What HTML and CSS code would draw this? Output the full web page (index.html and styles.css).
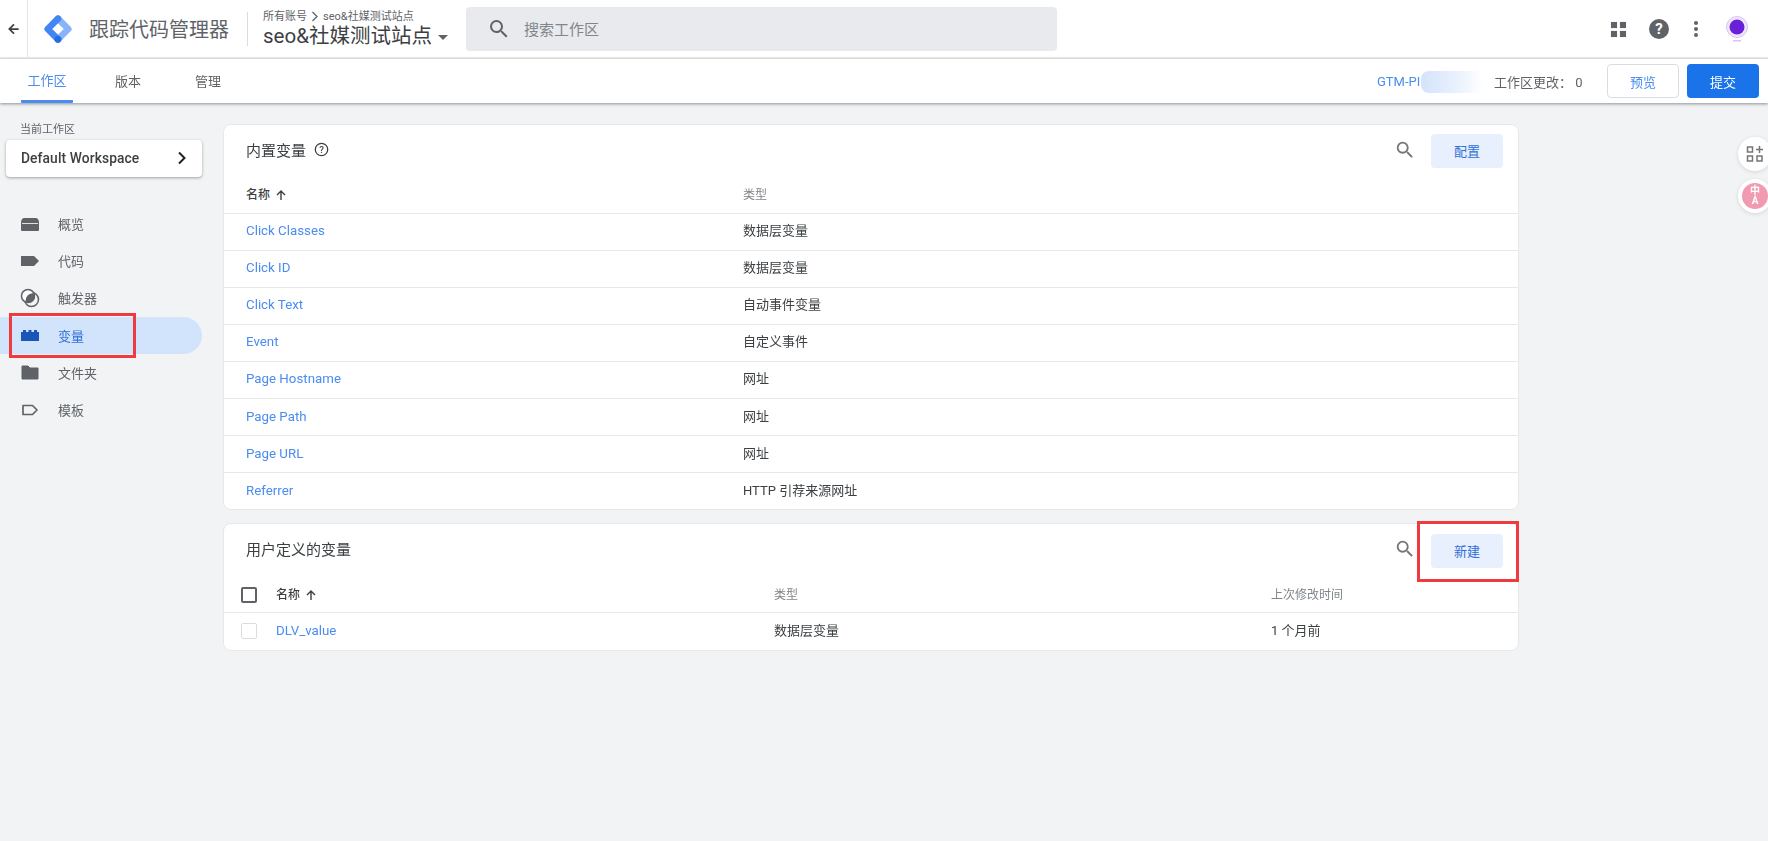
FILE: index.html
```html
<!DOCTYPE html>
<html lang="zh-CN">
<head>
<meta charset="utf-8">
<title>跟踪代码管理器</title>
<link rel="stylesheet" href="styles.css">
</head>
<body>
<div class="page">
  <header class="topbar">
    <div class="back">
      <svg width="14" height="14" viewBox="0 0 24 24"><path d="M20 12H5M12 4l-8 8 8 8" fill="none" stroke="#3c4043" stroke-width="3"/></svg>
    </div>
    <div class="brand">
      <svg class="logo" width="30" height="30" viewBox="0 0 32 32">
        <path d="M16 5L27 16L16 27" fill="none" stroke="#8ab4f8" stroke-width="7" stroke-linejoin="round" stroke-linecap="round"/>
        <path d="M16 5L5 16L16 27" fill="none" stroke="#4285f4" stroke-width="7" stroke-linejoin="round" stroke-linecap="round"/>
        <circle cx="16" cy="27" r="3.6" fill="#246fdb"/>
      </svg>
      <span class="brand-name">跟踪代码管理器</span>
    </div>
    <div class="account">
      <div class="crumb">所有账号 <svg width="8" height="11" viewBox="0 0 8 11"><path d="M1.5 1l4.5 4.5L1.5 10" fill="none" stroke="#5f6368" stroke-width="1.3"/></svg> seo&amp;社媒测试站点</div>
      <div class="container-name">seo&amp;社媒测试站点<i class="caret"></i></div>
    </div>
    <div class="search">
      <svg width="24" height="24" viewBox="0 0 24 24"><path d="M15.5 14h-.79l-.28-.27A6.471 6.471 0 0 0 16 9.5 6.5 6.5 0 1 0 9.5 16c1.61 0 3.09-.59 4.23-1.57l.27.28v.79l5 4.99L20.49 19l-4.99-5zm-6 0C7.01 14 5 11.99 5 9.5S7.01 5 9.5 5 14 7.01 14 9.5 11.99 14 9.5 14z" fill="#5f6368"/></svg>
      <span>搜索工作区</span>
    </div>
    <div class="top-icons">
      <svg width="17" height="17" viewBox="0 0 18 18" fill="#5f6368"><rect x="1" y="1" width="6.5" height="6.5"/><rect x="10.5" y="1" width="6.5" height="6.5"/><rect x="1" y="10.5" width="6.5" height="6.5"/><rect x="10.5" y="10.5" width="6.5" height="6.5"/></svg>
      <span class="help">?</span>
      <svg width="6" height="18" viewBox="0 0 6 18" fill="#5f6368"><circle cx="3" cy="3" r="2"/><circle cx="3" cy="9" r="2"/><circle cx="3" cy="15" r="2"/></svg>
      <svg width="24" height="28" viewBox="0 0 24 28"><circle cx="12" cy="12" r="10.5" fill="#efe6fb" stroke="#d9c5f5"/><circle cx="12" cy="12" r="7.5" fill="#6a1fd8"/><rect x="8" y="25" width="8" height="1.5" fill="#d9c5f5"/></svg>
    </div>
  </header>

  <nav class="tabbar">
    <a class="tab active">工作区</a>
    <a class="tab">版本</a>
    <a class="tab">管理</a>
    <div class="tab-right">
      <span class="gtm">GTM-PI<i class="smudge"></i></span>
      <span class="changes">工作区更改： 0</span>
      <button class="btn btn-outline">预览</button>
      <button class="btn btn-primary">提交</button>
    </div>
  </nav>

  <div class="body">
    <aside class="side">
      <div class="side-label">当前工作区</div>
      <div class="workspace">
        <span>Default Workspace</span>
        <svg width="10" height="14" viewBox="0 0 10 14"><path d="M2 1.5L7.5 7 2 12.5" fill="none" stroke="#202124" stroke-width="2"/></svg>
      </div>
      <ul class="nav">
        <li class="nav-item">
          <svg width="20" height="20" viewBox="0 0 20 20"><path d="M1 9c0-3 1-5 4-5h10c3 0 4 2 4 5v7a1 1 0 0 1-1 1H2a1 1 0 0 1-1-1z" fill="#5f6368"/><path d="M2 9.500h16" stroke="#fff" stroke-width=".8"/></svg>
          <span>概览</span>
        </li>
        <li class="nav-item">
          <svg width="20" height="20" viewBox="0 0 20 20"><path d="M1 5h13l5 5-5 5H1z" fill="#5f6368"/></svg>
          <span>代码</span>
        </li>
        <li class="nav-item">
          <svg width="20" height="20" viewBox="0 0 20 20"><circle cx="11.500" cy="11.500" r="7" fill="none" stroke="#5f6368" stroke-width="1.500"/><circle cx="8" cy="8" r="6.500" fill="#fff" stroke="#5f6368" stroke-width="1.500"/><path d="M14 5.500A6.500 6.500 0 0 1 6 14.500 7 7 0 0 1 14 5.500z" fill="#5f6368"/></svg>
          <span>触发器</span>
        </li>
        <li class="nav-item current">
          <svg width="20" height="20" viewBox="0 0 20 20"><path d="M1 7h2V5h3v2h2.500V5h3v2H14V5h3v2h2v9H1z" fill="#1a56b8"/></svg>
          <span>变量</span>
          <i class="mark mark-nav"></i>
        </li>
        <li class="nav-item">
          <svg width="20" height="20" viewBox="0 0 20 20"><path d="M2 4h6l2 2h8v11H2z" fill="#5f6368" stroke="#5f6368" stroke-linejoin="round"/></svg>
          <span>文件夹</span>
        </li>
        <li class="nav-item">
          <svg width="20" height="20" viewBox="0 0 20 20"><path d="M3 5.500h9.500L17 10l-4.500 4.500H3z" fill="none" stroke="#5f6368" stroke-width="1.700" stroke-linejoin="round"/></svg>
          <span>模板</span>
        </li>
      </ul>
    </aside>

    <main class="content">
      <section class="card">
        <div class="card-head">
          <h2>内置变量</h2>
          <svg class="q" width="15" height="15" viewBox="0 0 14 14"><circle cx="7" cy="7" r="5.800" fill="none" stroke="#3c4043" stroke-width="1.200"/><text x="7" y="10" text-anchor="middle" class="q-text">?</text></svg>
          <svg class="mag" width="22" height="22" viewBox="0 0 24 24"><path d="M15.5 14h-.79l-.28-.27A6.471 6.471 0 0 0 16 9.5 6.5 6.5 0 1 0 9.5 16c1.61 0 3.09-.59 4.23-1.57l.27.28v.79l5 4.99L20.49 19l-4.99-5zm-6 0C7.01 14 5 11.99 5 9.5S7.01 5 9.5 5 14 7.01 14 9.5 11.99 14 9.5 14z" fill="#757575"/></svg>
          <button class="btn btn-soft">配置</button>
        </div>
        <div class="row head builtin">
          <span class="sort">名称<svg class="arrow" width="12" height="12" viewBox="0 0 12 12"><path d="M6 11V2M2 6l4-4 4 4" fill="none" stroke="#3c4043" stroke-width="1.400"/></svg></span><span class="muted">类型</span>
        </div>
        <div class="row builtin"><a>Click Classes</a><span>数据层变量</span></div>
        <div class="row builtin"><a>Click ID</a><span>数据层变量</span></div>
        <div class="row builtin"><a>Click Text</a><span>自动事件变量</span></div>
        <div class="row builtin"><a>Event</a><span>自定义事件</span></div>
        <div class="row builtin"><a>Page Hostname</a><span>网址</span></div>
        <div class="row builtin"><a>Page Path</a><span>网址</span></div>
        <div class="row builtin"><a>Page URL</a><span>网址</span></div>
        <div class="row builtin"><a>Referrer</a><span>HTTP 引荐来源网址</span></div>
      </section>

      <section class="card second">
        <div class="card-head">
          <h2>用户定义的变量</h2>
          <svg class="mag" width="22" height="22" viewBox="0 0 24 24"><path d="M15.5 14h-.79l-.28-.27A6.471 6.471 0 0 0 16 9.5 6.5 6.5 0 1 0 9.5 16c1.61 0 3.09-.59 4.23-1.57l.27.28v.79l5 4.99L20.49 19l-4.99-5zm-6 0C7.01 14 5 11.99 5 9.5S7.01 5 9.5 5 14 7.01 14 9.5 11.99 14 9.5 14z" fill="#757575"/></svg>
          <button class="btn btn-soft">新建</button>
          <i class="mark mark-new"></i>
        </div>
        <div class="row head user">
          <i class="check strong"></i>
          <span class="sort">名称<svg class="arrow" width="12" height="12" viewBox="0 0 12 12"><path d="M6 11V2M2 6l4-4 4 4" fill="none" stroke="#3c4043" stroke-width="1.400"/></svg></span><span class="muted">类型</span><span class="muted">上次修改时间</span>
        </div>
        <div class="row user"><i class="check"></i><a>DLV_value</a><span>数据层变量</span><span>1 个月前</span></div>
      </section>
    </main>
  </div>

  <div class="float float-a">
    <svg width="18" height="18" viewBox="0 0 18 18" fill="none" stroke="#757575" stroke-width="1.500"><rect x="1.500" y="2" width="5" height="5"/><rect x="1.500" y="11" width="5" height="5"/><rect x="11" y="11" width="5" height="5"/><path d="M13.500 1v7M10 4.500h7"/></svg>
  </div>
  <div class="float float-b"><span>中<br>A</span></div>
</div>
</body>
</html>
```
FILE: styles.css
```css
* { box-sizing: border-box; }
html, body { margin: 0; height: 100%; }
body {
  font-family: Roboto, "Noto Sans CJK SC", sans-serif;
  color: #5f6368;
  background: #f1f3f4;
  overflow: hidden;
}
.page { position: relative; height: 841px; filter: blur(.35px); }

.topbar {
  height: 59px;
  background: #fff;
  border-bottom: 2px solid #ececec;
  display: flex;
  align-items: center;
}
.back {
  width: 28px;
  height: 57px;
  border-right: 1px solid #e4e4e4;
  display: flex;
  align-items: center;
  justify-content: center;
}
.brand { display: flex; align-items: center; margin-left: 15px; }
.logo { flex: none; }
.brand-name { font-size: 20px; margin-left: 16px; color: #5f6368; width: 142px; white-space: nowrap; }
.account {
  margin-left: 16px;
  padding-left: 15px;
  border-left: 1px solid #dadce0;
  height: 34px;
  width: 219px;
  display: flex;
  flex-direction: column;
}
.crumb { font-size: 11px; line-height: 13px; color: #5f6368; display: flex; gap: 4px; align-items: center; margin-top: -2px; white-space: nowrap; }
.container-name { font-size: 20.5px; line-height: 26px; color: #3c4043; white-space: nowrap; display: flex; align-items: center; }
.caret { width: 0; height: 0; margin-left: 6px; margin-top: 3px; border: 5px solid transparent; border-top-color: #5f6368; border-bottom: 0; }
.search {
  width: 591px;
  height: 44px;
  background: #e8eaed;
  border-radius: 4px;
  display: flex;
  align-items: center;
  gap: 13px;
  padding-left: 21px;
  font-size: 15px;
  color: #80868b;
}
.top-icons { margin-left: auto; margin-top: 1px; margin-right: 19px; display: flex; align-items: center; }
.top-icons > :nth-child(1) { margin-right: 22px; }
.top-icons > :nth-child(2) { margin-right: 24px; }
.top-icons > :nth-child(3) { margin-right: 26px; }
.help {
  width: 20px; height: 20px; border-radius: 50%;
  background: #5f6368; color: #fff;
  font: 700 15px/20px Roboto, sans-serif;
  text-align: center;
}

.tabbar {
  height: 44px;
  background: #fff;
  display: flex;
  align-items: stretch;
  padding-left: 21px;
  box-shadow: 0 1px 3px rgba(60, 64, 67, .55);
  position: relative;
  font-size: 13px;
}
.tab { display: flex; align-items: center; justify-content: center; color: #5f6368; padding-bottom: 1px; }
.tab:nth-child(1) { width: 52px; color: #4a8cf0; border-bottom: 3px solid #4a8cf0; border-radius: 0 0 1px 1px; }
.tab:nth-child(2) { margin-left: 42px; }
.tab:nth-child(3) { margin-left: 54px; }
.tab-right { margin-left: auto; display: flex; align-items: center; padding-right: 9px; }
.gtm { color: #4a8cf0; width: 117px; position: relative; white-space: nowrap; }
.smudge {
  position: absolute; left: 44px; top: -3px; width: 62px; height: 22px;
  background: linear-gradient(90deg, #d4e3fb, #e8f0fd 55%, #fff);
  border-radius: 8px;
}
.changes { color: #5f6368; width: 113px; white-space: nowrap; font-size: 13px; }
.btn {
  height: 34px; width: 72px;
  border-radius: 4px; border: 0;
  font-family: inherit; font-size: 13px;
  padding: 0;
}
.btn-outline { background: #fff; border: 1px solid #dadce0; color: #4a8cf0; margin-right: 8px; }
.btn-primary { background: #1a73e8; color: #fff; }
.btn-soft { background: #e8f0fe; color: #2f6fd6; margin-left: 15px; }

.body { display: flex; align-items: flex-start; }
.side { width: 223px; flex: none; position: relative; }
.side-label { font-size: 11px; line-height: 14px; margin: 20px 0 0 20px; color: #5f6368; }
.workspace {
  margin: 3px 21px 0 6px;
  height: 37px;
  background: #fff;
  border-radius: 4px;
  box-shadow: 0 1px 3px rgba(60, 64, 67, .45);
  display: flex; align-items: center; justify-content: space-between;
  padding: 0 15px 1px;
  font-size: 13.800px;
  font-weight: 500;
  letter-spacing: .1px;
  color: #3c4043;
}
.nav { list-style: none; margin: 28px 21px 0 0; padding: 0; }
.nav-item {
  position: relative;
  height: 37.2px;
  display: flex;
  align-items: center;
  padding-left: 20px;
  gap: 18px;
  font-size: 13px;
}
.nav-item.current { background: #d2e3fc; color: #2f6fd6; border-radius: 0 19px 19px 0; }
.mark { position: absolute; border: 3px solid #ef3b3f; pointer-events: none; }
.mark-nav { left: 9px; top: -4px; width: 127px; height: 45px; }

.content { width: 1296px; padding-top: 21px; }
.card {
  background: #fff;
  border: 1px solid #e6e8ea;
  border-radius: 8px;
}
.second { margin-top: 13px; }
.card-head {
  position: relative;
  height: 51px;
  display: flex;
  align-items: center;
  padding: 0 15px 0 22px;
}
.card-head h2 { margin: -3px 0 0; font-size: 15px; font-weight: 400; color: #3c4043; }
.q { margin-left: 8px; margin-top: -2px; }
.q-text { font: 500 9px Roboto, sans-serif; fill: #3c4043; }
.mag { margin-left: auto; margin-top: -2px; }
.second .btn-soft { margin-top: 3px; padding-bottom: 2px; }
.mark-new { right: -1px; top: -3px; width: 102px; height: 61px; }

.row {
  display: grid;
  align-items: center;
  height: 37.1px;
  padding-bottom: 1px;
  border-top: 1px solid #e6e8ea;
  font-size: 13px;
  line-height: 18px;
  color: #3c4043;
}
.row a { color: #4a8cf0; font-size: 13.300px; }
.row.head { border-top: 0; font-size: 12px; height: 36.5px; padding-bottom: 0; padding-top: 2px; }
.builtin { grid-template-columns: 497px 1fr; padding-left: 22px; }
.user { grid-template-columns: 35px 498px 497px 1fr; padding-left: 17px; height: 38px; }
.sort { font-size: 12px; font-weight: 500; color: #3c4043; white-space: nowrap; display: flex; align-items: center; gap: 5px; }
.muted { color: #80868b; font-size: 12px; }
.check { width: 16px; height: 16px; border: 1.500px solid #dadce0; border-radius: 2px; display: block; }
.check.strong { border: 2px solid #5f6368; }

.float {
  position: absolute;
  right: -4px;
  width: 34px; height: 34px;
  background: #fff;
  border-radius: 50%;
  box-shadow: 0 1px 4px rgba(0, 0, 0, .12);
  display: flex; align-items: center; justify-content: center;
}
.float-a { top: 137px; }
.float-b { top: 179px; }
.float-b span {
  width: 26px; height: 26px; border-radius: 50%;
  background: #f09bb0; color: #fff;
  font-size: 10px; line-height: 10px; font-weight: 700; text-align: center;
  display: flex; align-items: center; justify-content: center;
}
```
